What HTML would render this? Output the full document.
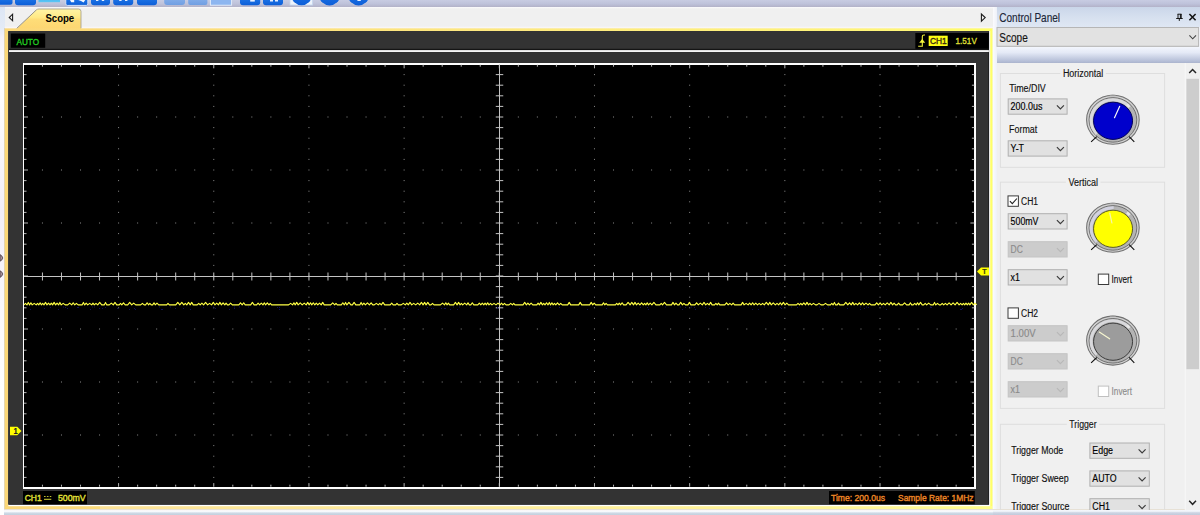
<!DOCTYPE html>
<html lang="en">
<head>
<meta charset="utf-8">
<title>Scope</title>
<style>
html,body{margin:0;padding:0;}
body{width:1200px;height:515px;overflow:hidden;background:#fff;font-family:"Liberation Sans",sans-serif;font-size:9px;color:#111;}
#app{position:relative;width:1200px;height:515px;overflow:hidden;background:#f4f6fb;}
.abs{position:absolute;}
/* toolbar strip */
#toolbar{left:0;top:0;width:1200px;height:7.2px;background:linear-gradient(#c8cce2,#bec2da 55%,#b3b2c8);}
.tb{position:absolute;top:-6px;height:11px;border-radius:3px;background:linear-gradient(#2f86ee,#0d5fd6);}
.tb.l{background:linear-gradient(#8fb6ee,#6f9fe2);}
.tb.c{border-radius:50%;height:19px;top:-14px;}
/* tab strip */
#leftedge{left:0;top:7px;width:4.6px;height:508px;background:linear-gradient(#dde6f4 0,#e4ebf6 4%,#f4f2fa 6%,#ffffff 14%,#f2eef8 40%,#ffffff 75%);}
#tabbar{left:4.6px;top:7.2px;width:988px;height:21.4px;background:linear-gradient(#fbfbfc 0,#f0f0f0 9%,#f0f0f0 86%,#faf6f6 95%,#f6ecd8);}
#tab{left:0;top:0;width:100px;height:30px;}
.tabtxt{left:45.5px;top:12px;font-weight:bold;font-size:9.6px;line-height:12px;color:#000;letter-spacing:-0.1px;}
/* scope frame */
#frame{left:4.5px;top:28.4px;width:988.1px;height:481px;background:linear-gradient(90deg,#fbd778,#fde07a 50%,#fff574 92%,#ffff62);}
#frameinner{left:8.4px;top:31.1px;width:981.5px;height:475.3px;background:linear-gradient(#fff 0,#fff 99.6%,#fff6c8);}
#dark{left:8.5px;top:31.2px;width:980.5px;height:473.4px;background:#333333;}
.blk{background:#000;}
#hline{left:9px;top:50.1px;width:980px;height:2px;background:#f4f4f4;}
#hlineb{left:9px;top:48.6px;width:980px;height:1.5px;background:#151515;}
.scopetxt{font-size:8.6px;line-height:10px;white-space:nowrap;}
svg.scope{position:absolute;left:0;top:0;}
/* control panel */
#cpdiv{left:992.6px;top:7px;width:4px;height:504px;background:linear-gradient(90deg,#fbfbfd,#eef1f8);}
#cphead{left:996.5px;top:7px;width:203.5px;height:20.4px;background:linear-gradient(#cad6e9,#d6e0ef 50%,#dfe7f4);}
#cphead span{position:absolute;left:3px;top:3.4px;font-size:11.6px;line-height:14px;color:#1e2a3c;letter-spacing:-0.15px;}
#cpcombo{left:996.5px;top:27px;width:202.5px;height:19.5px;background:#e2e2e2;}
#cpcombo span{position:absolute;left:2.4px;top:2px;font-size:11.6px;line-height:14px;color:#111;letter-spacing:-0.1px;}
#cpgrad{left:996.5px;top:46.5px;width:203.5px;height:16.5px;background:linear-gradient(#f3f6fd,#e4e9f6 35%,#b4bdd6 90%,#aab3cd);}
#cpbody{left:996.5px;top:63px;width:203.5px;height:447.5px;background:#f0f0f0;}
#bottom{left:4px;top:509.4px;width:1196px;height:6px;background:linear-gradient(#c9c2a6 0,#fbf6f6 14%,#f6f9fe 45%,#cfdae6 66%,#c2d0de);}
#bottomR{display:none;}
.grp{position:absolute;border:1px solid #dcdcdc;box-sizing:border-box;}
.gt{position:absolute;background:#f0f0f0;padding:0 2px;font-size:9.1px;line-height:11px;white-space:nowrap;transform:translateX(-50%);color:#111;}
.lbl{position:absolute;font-size:9.1px;line-height:11px;white-space:nowrap;color:#111;}
.cb{position:absolute;box-sizing:border-box;width:60px;height:16.4px;border:1px solid #adadad;background:#e1e1e1;font-size:9.1px;line-height:14.4px;padding-left:2.4px;color:#000;white-space:nowrap;}
.cb.dis{background:#cccccc;border-color:#bfbfbf;color:#8c8c8c;}
.cb svg{position:absolute;right:3.6px;top:5.6px;}
.chk{position:absolute;box-sizing:border-box;width:11px;height:11px;border:1px solid #333;background:#fff;}
.chk.dis{border-color:#c4c4c4;}
#sb{left:1185.5px;top:63px;width:14.5px;height:447.5px;background:#f0f0f0;}
#sbthumb{left:1186.4px;top:78.8px;width:12.6px;height:290.4px;background:#cdcdcd;}
</style>
</head>
<body>
<div id="app">
  <!-- toolbar sliver -->
  <div id="toolbar" class="abs">
  <svg class="abs" style="left:0;top:0" width="400" height="8" viewBox="0 0 400 8">
    <defs>
      <linearGradient id="ib" x1="0" y1="0" x2="0" y2="1"><stop offset="0" stop-color="#2a84f0"/><stop offset="1" stop-color="#0c5ed8"/></linearGradient>
      <linearGradient id="il" x1="0" y1="0" x2="0" y2="1"><stop offset="0" stop-color="#92b8f0"/><stop offset="1" stop-color="#709fe2"/></linearGradient>
      <linearGradient id="ic" x1="0" y1="0" x2="0" y2="1"><stop offset="0" stop-color="#2f9cf0"/><stop offset="1" stop-color="#5cc8f4"/></linearGradient>
    </defs>
    <rect x="-4" y="-6" width="16.5" height="10.8" rx="2.5" fill="url(#ib)"/>
    <rect x="15" y="-6" width="21" height="11.2" rx="3" fill="url(#ib)"/>
    <rect x="38.5" y="-6" width="21.5" height="8.2" fill="url(#ic)"/>
    <rect x="65.8" y="-6" width="22" height="11.4" rx="1.5" fill="url(#ib)" stroke="#dbe7f8" stroke-width="0.9"/>
    <path d="M70 0 h4.2 v2.2 h-3 Z M78.2 0 h7 l-1.6 2.6 l-2.6 -1.6 Z" fill="#f4f8ff"/>
    <rect x="91" y="-6" width="19" height="11.2" rx="3" fill="url(#ib)"/>
    <path d="M96 0 h2.4 v1 h-2.4 Z M101.8 0 h2.4 v1 h-2.4 Z" fill="#e8f0ff"/>
    <rect x="113.2" y="-6" width="20" height="11.2" rx="3" fill="url(#ib)"/>
    <path d="M119.2 0 h2.4 v1 h-2.4 Z M125 0 h2.4 v1 h-2.4 Z" fill="#e8f0ff"/>
    <rect x="137" y="-6" width="20" height="11.2" rx="3" fill="url(#ib)"/>
    <rect x="164.2" y="-6" width="20.8" height="11" rx="3" fill="url(#il)"/>
    <rect x="188.2" y="-6" width="19.2" height="11" rx="2" fill="url(#il)"/>
    <rect x="210.4" y="-6" width="21.2" height="11.2" fill="#8db6f0" stroke="#e6effb" stroke-width="0.9"/>
    <rect x="240" y="-6" width="20.2" height="11.2" rx="3" fill="url(#ib)"/>
    <path d="M250.2 0 h4.6 v1.6 h-4.6 Z" fill="#e8f0ff"/>
    <rect x="263" y="-6" width="20" height="11.2" rx="3" fill="url(#ib)"/>
    <path d="M270 0 h3 v1.6 h-3 Z M275 0 h3 v1.6 h-3 Z" fill="#e8f0ff"/>
    <rect x="290" y="-6" width="22.6" height="11" fill="#eef4fc" stroke="#c4d6ee" stroke-width="0.8"/>
    <ellipse cx="301.6" cy="-5" rx="10.2" ry="10.3" fill="url(#ib)"/>
    <ellipse cx="329.6" cy="-5" rx="10.6" ry="10.4" fill="url(#ib)"/>
    <ellipse cx="358.6" cy="-5" rx="10.6" ry="10.4" fill="url(#ib)"/>
    <path d="M357.4 0 h3.4 v1 h-3.4 Z" fill="#e8f0ff"/>
  </svg>
  </div>
  <div id="leftedge" class="abs"></div>
  <div id="tabbar" class="abs"></div>
  <svg class="abs" style="left:0;top:250px" width="5" height="32" viewBox="0 0 5 32">
    <path d="M0 4.6 Q2.6 6 2.8 8 Q2.6 10 0 11.2 Z" fill="#a8909a" stroke="#3a3038" stroke-width="0.7"/>
    <path d="M0 20.8 Q2.6 22 2.8 24 Q2.6 26 0 27.4 Z" fill="#a8909a" stroke="#3a3038" stroke-width="0.7"/>
  </svg>
  <!-- tab -->
  <svg id="tab" class="abs" viewBox="0 0 100 30" width="100" height="30">
    <defs><linearGradient id="tg" x1="0" y1="0" x2="0" y2="1"><stop offset="0.1" stop-color="#fff29e"/><stop offset="0.42" stop-color="#ffe986"/><stop offset="0.52" stop-color="#fedd78"/><stop offset="1" stop-color="#fdd672"/></linearGradient></defs>
    <path d="M16.5 29 L36.5 10 Q37.5 9 39 9 L78.5 9 Q81 9 81 11.5 L81 29 Z" fill="url(#tg)"/>
    <path d="M16.5 28.6 L36.5 9.8" stroke="#8a8676" stroke-width="0.9" fill="none"/>
    <path d="M36.5 9.8 Q37.5 9 39 9 L78.5 9 Q81 9 81 11.5 L81 28.4" stroke="#aaa590" stroke-width="0.9" fill="none"/>
    <path d="M12.6 14.2 L12.6 20.8 L9.2 17.5 Z" fill="none" stroke="#1c1c1c" stroke-width="1.1"/>
  </svg>
  <svg class="abs" style="left:975px;top:10px" width="16" height="16" viewBox="975 10 16 16"><path d="M981.4 14 L981.4 21.2 L985.2 17.6 Z" fill="none" stroke="#1c1c1c" stroke-width="1.1"/></svg>
  <svg class="abs" style="left:0;top:0" width="100" height="30" viewBox="0 0 100 30"><text x="45.4" y="21.7" font-family="Liberation Sans, sans-serif" font-weight="bold" font-size="10.5" textLength="28.8" lengthAdjust="spacingAndGlyphs" fill="#000">Scope</text></svg>

  <!-- scope frame -->
  <svg class="scope" width="1200" height="515" viewBox="0 0 1200 515" shape-rendering="crispEdges">
<defs><linearGradient id="fg" x1="0" y1="0" x2="1" y2="0"><stop offset="0" stop-color="#fbd778"/><stop offset="0.5" stop-color="#fde880"/><stop offset="0.92" stop-color="#fff678"/><stop offset="1" stop-color="#ffff68"/></linearGradient></defs>
<g shape-rendering="auto">
<rect x="4.1" y="28.2" width="0.6" height="481.4" fill="#b9b9b9"/>
<rect x="4.6" y="28.4" width="987.9" height="481" fill="url(#fg)"/>
<rect x="100" y="506" width="892.5" height="3.4" fill="#ffffff" opacity="0.22"/>
<rect x="8.3" y="31.1" width="981.9" height="475.1" fill="#ffffff"/>
<rect x="8.3" y="31.1" width="980.8" height="473.7" fill="#121216"/>
<rect x="8.3" y="31.1" width="980.2" height="472.9" fill="#333333"/>
<rect x="9" y="48.8" width="979.9" height="1.4" fill="#141414"/>
<rect x="9" y="50.1" width="979.9" height="2" fill="#f6f6f6"/>
<rect x="9" y="52.1" width="979.9" height="0.5" fill="#1c1c1c"/>
</g>
<rect x="22.5" y="63" width="953.5" height="425.5" fill="#fff"/>
<rect x="24" y="64.7" width="950.4" height="422" fill="#000"/>
<g fill="#8c8c8c" shape-rendering="auto"><rect x="118.08" y="74.1" width="1" height="1"/><rect x="118.08" y="84.7" width="1" height="1"/><rect x="118.08" y="95.3" width="1" height="1"/><rect x="118.08" y="105.9" width="1" height="1"/><rect x="118.08" y="116.5" width="1" height="1"/><rect x="118.08" y="127.1" width="1" height="1"/><rect x="118.08" y="137.7" width="1" height="1"/><rect x="118.08" y="148.3" width="1" height="1"/><rect x="118.08" y="158.9" width="1" height="1"/><rect x="118.08" y="169.5" width="1" height="1"/><rect x="118.08" y="180.1" width="1" height="1"/><rect x="118.08" y="190.7" width="1" height="1"/><rect x="118.08" y="201.3" width="1" height="1"/><rect x="118.08" y="211.9" width="1" height="1"/><rect x="118.08" y="222.5" width="1" height="1"/><rect x="118.08" y="233.1" width="1" height="1"/><rect x="118.08" y="243.7" width="1" height="1"/><rect x="118.08" y="254.3" width="1" height="1"/><rect x="118.08" y="264.9" width="1" height="1"/><rect x="118.08" y="275.5" width="1" height="1"/><rect x="118.08" y="286.1" width="1" height="1"/><rect x="118.08" y="296.7" width="1" height="1"/><rect x="118.08" y="307.3" width="1" height="1"/><rect x="118.08" y="317.9" width="1" height="1"/><rect x="118.08" y="328.5" width="1" height="1"/><rect x="118.08" y="339.1" width="1" height="1"/><rect x="118.08" y="349.7" width="1" height="1"/><rect x="118.08" y="360.3" width="1" height="1"/><rect x="118.08" y="370.9" width="1" height="1"/><rect x="118.08" y="381.5" width="1" height="1"/><rect x="118.08" y="392.1" width="1" height="1"/><rect x="118.08" y="402.7" width="1" height="1"/><rect x="118.08" y="413.3" width="1" height="1"/><rect x="118.08" y="423.9" width="1" height="1"/><rect x="118.08" y="434.5" width="1" height="1"/><rect x="118.08" y="445.1" width="1" height="1"/><rect x="118.08" y="455.7" width="1" height="1"/><rect x="118.08" y="466.3" width="1" height="1"/><rect x="118.08" y="476.9" width="1" height="1"/><rect x="213.26" y="74.1" width="1" height="1"/><rect x="213.26" y="84.7" width="1" height="1"/><rect x="213.26" y="95.3" width="1" height="1"/><rect x="213.26" y="105.9" width="1" height="1"/><rect x="213.26" y="116.5" width="1" height="1"/><rect x="213.26" y="127.1" width="1" height="1"/><rect x="213.26" y="137.7" width="1" height="1"/><rect x="213.26" y="148.3" width="1" height="1"/><rect x="213.26" y="158.9" width="1" height="1"/><rect x="213.26" y="169.5" width="1" height="1"/><rect x="213.26" y="180.1" width="1" height="1"/><rect x="213.26" y="190.7" width="1" height="1"/><rect x="213.26" y="201.3" width="1" height="1"/><rect x="213.26" y="211.9" width="1" height="1"/><rect x="213.26" y="222.5" width="1" height="1"/><rect x="213.26" y="233.1" width="1" height="1"/><rect x="213.26" y="243.7" width="1" height="1"/><rect x="213.26" y="254.3" width="1" height="1"/><rect x="213.26" y="264.9" width="1" height="1"/><rect x="213.26" y="275.5" width="1" height="1"/><rect x="213.26" y="286.1" width="1" height="1"/><rect x="213.26" y="296.7" width="1" height="1"/><rect x="213.26" y="307.3" width="1" height="1"/><rect x="213.26" y="317.9" width="1" height="1"/><rect x="213.26" y="328.5" width="1" height="1"/><rect x="213.26" y="339.1" width="1" height="1"/><rect x="213.26" y="349.7" width="1" height="1"/><rect x="213.26" y="360.3" width="1" height="1"/><rect x="213.26" y="370.9" width="1" height="1"/><rect x="213.26" y="381.5" width="1" height="1"/><rect x="213.26" y="392.1" width="1" height="1"/><rect x="213.26" y="402.7" width="1" height="1"/><rect x="213.26" y="413.3" width="1" height="1"/><rect x="213.26" y="423.9" width="1" height="1"/><rect x="213.26" y="434.5" width="1" height="1"/><rect x="213.26" y="445.1" width="1" height="1"/><rect x="213.26" y="455.7" width="1" height="1"/><rect x="213.26" y="466.3" width="1" height="1"/><rect x="213.26" y="476.9" width="1" height="1"/><rect x="308.44" y="74.1" width="1" height="1"/><rect x="308.44" y="84.7" width="1" height="1"/><rect x="308.44" y="95.3" width="1" height="1"/><rect x="308.44" y="105.9" width="1" height="1"/><rect x="308.44" y="116.5" width="1" height="1"/><rect x="308.44" y="127.1" width="1" height="1"/><rect x="308.44" y="137.7" width="1" height="1"/><rect x="308.44" y="148.3" width="1" height="1"/><rect x="308.44" y="158.9" width="1" height="1"/><rect x="308.44" y="169.5" width="1" height="1"/><rect x="308.44" y="180.1" width="1" height="1"/><rect x="308.44" y="190.7" width="1" height="1"/><rect x="308.44" y="201.3" width="1" height="1"/><rect x="308.44" y="211.9" width="1" height="1"/><rect x="308.44" y="222.5" width="1" height="1"/><rect x="308.44" y="233.1" width="1" height="1"/><rect x="308.44" y="243.7" width="1" height="1"/><rect x="308.44" y="254.3" width="1" height="1"/><rect x="308.44" y="264.9" width="1" height="1"/><rect x="308.44" y="275.5" width="1" height="1"/><rect x="308.44" y="286.1" width="1" height="1"/><rect x="308.44" y="296.7" width="1" height="1"/><rect x="308.44" y="307.3" width="1" height="1"/><rect x="308.44" y="317.9" width="1" height="1"/><rect x="308.44" y="328.5" width="1" height="1"/><rect x="308.44" y="339.1" width="1" height="1"/><rect x="308.44" y="349.7" width="1" height="1"/><rect x="308.44" y="360.3" width="1" height="1"/><rect x="308.44" y="370.9" width="1" height="1"/><rect x="308.44" y="381.5" width="1" height="1"/><rect x="308.44" y="392.1" width="1" height="1"/><rect x="308.44" y="402.7" width="1" height="1"/><rect x="308.44" y="413.3" width="1" height="1"/><rect x="308.44" y="423.9" width="1" height="1"/><rect x="308.44" y="434.5" width="1" height="1"/><rect x="308.44" y="445.1" width="1" height="1"/><rect x="308.44" y="455.7" width="1" height="1"/><rect x="308.44" y="466.3" width="1" height="1"/><rect x="308.44" y="476.9" width="1" height="1"/><rect x="403.62" y="74.1" width="1" height="1"/><rect x="403.62" y="84.7" width="1" height="1"/><rect x="403.62" y="95.3" width="1" height="1"/><rect x="403.62" y="105.9" width="1" height="1"/><rect x="403.62" y="116.5" width="1" height="1"/><rect x="403.62" y="127.1" width="1" height="1"/><rect x="403.62" y="137.7" width="1" height="1"/><rect x="403.62" y="148.3" width="1" height="1"/><rect x="403.62" y="158.9" width="1" height="1"/><rect x="403.62" y="169.5" width="1" height="1"/><rect x="403.62" y="180.1" width="1" height="1"/><rect x="403.62" y="190.7" width="1" height="1"/><rect x="403.62" y="201.3" width="1" height="1"/><rect x="403.62" y="211.9" width="1" height="1"/><rect x="403.62" y="222.5" width="1" height="1"/><rect x="403.62" y="233.1" width="1" height="1"/><rect x="403.62" y="243.7" width="1" height="1"/><rect x="403.62" y="254.3" width="1" height="1"/><rect x="403.62" y="264.9" width="1" height="1"/><rect x="403.62" y="275.5" width="1" height="1"/><rect x="403.62" y="286.1" width="1" height="1"/><rect x="403.62" y="296.7" width="1" height="1"/><rect x="403.62" y="307.3" width="1" height="1"/><rect x="403.62" y="317.9" width="1" height="1"/><rect x="403.62" y="328.5" width="1" height="1"/><rect x="403.62" y="339.1" width="1" height="1"/><rect x="403.62" y="349.7" width="1" height="1"/><rect x="403.62" y="360.3" width="1" height="1"/><rect x="403.62" y="370.9" width="1" height="1"/><rect x="403.62" y="381.5" width="1" height="1"/><rect x="403.62" y="392.1" width="1" height="1"/><rect x="403.62" y="402.7" width="1" height="1"/><rect x="403.62" y="413.3" width="1" height="1"/><rect x="403.62" y="423.9" width="1" height="1"/><rect x="403.62" y="434.5" width="1" height="1"/><rect x="403.62" y="445.1" width="1" height="1"/><rect x="403.62" y="455.7" width="1" height="1"/><rect x="403.62" y="466.3" width="1" height="1"/><rect x="403.62" y="476.9" width="1" height="1"/><rect x="593.98" y="74.1" width="1" height="1"/><rect x="593.98" y="84.7" width="1" height="1"/><rect x="593.98" y="95.3" width="1" height="1"/><rect x="593.98" y="105.9" width="1" height="1"/><rect x="593.98" y="116.5" width="1" height="1"/><rect x="593.98" y="127.1" width="1" height="1"/><rect x="593.98" y="137.7" width="1" height="1"/><rect x="593.98" y="148.3" width="1" height="1"/><rect x="593.98" y="158.9" width="1" height="1"/><rect x="593.98" y="169.5" width="1" height="1"/><rect x="593.98" y="180.1" width="1" height="1"/><rect x="593.98" y="190.7" width="1" height="1"/><rect x="593.98" y="201.3" width="1" height="1"/><rect x="593.98" y="211.9" width="1" height="1"/><rect x="593.98" y="222.5" width="1" height="1"/><rect x="593.98" y="233.1" width="1" height="1"/><rect x="593.98" y="243.7" width="1" height="1"/><rect x="593.98" y="254.3" width="1" height="1"/><rect x="593.98" y="264.9" width="1" height="1"/><rect x="593.98" y="275.5" width="1" height="1"/><rect x="593.98" y="286.1" width="1" height="1"/><rect x="593.98" y="296.7" width="1" height="1"/><rect x="593.98" y="307.3" width="1" height="1"/><rect x="593.98" y="317.9" width="1" height="1"/><rect x="593.98" y="328.5" width="1" height="1"/><rect x="593.98" y="339.1" width="1" height="1"/><rect x="593.98" y="349.7" width="1" height="1"/><rect x="593.98" y="360.3" width="1" height="1"/><rect x="593.98" y="370.9" width="1" height="1"/><rect x="593.98" y="381.5" width="1" height="1"/><rect x="593.98" y="392.1" width="1" height="1"/><rect x="593.98" y="402.7" width="1" height="1"/><rect x="593.98" y="413.3" width="1" height="1"/><rect x="593.98" y="423.9" width="1" height="1"/><rect x="593.98" y="434.5" width="1" height="1"/><rect x="593.98" y="445.1" width="1" height="1"/><rect x="593.98" y="455.7" width="1" height="1"/><rect x="593.98" y="466.3" width="1" height="1"/><rect x="593.98" y="476.9" width="1" height="1"/><rect x="689.16" y="74.1" width="1" height="1"/><rect x="689.16" y="84.7" width="1" height="1"/><rect x="689.16" y="95.3" width="1" height="1"/><rect x="689.16" y="105.9" width="1" height="1"/><rect x="689.16" y="116.5" width="1" height="1"/><rect x="689.16" y="127.1" width="1" height="1"/><rect x="689.16" y="137.7" width="1" height="1"/><rect x="689.16" y="148.3" width="1" height="1"/><rect x="689.16" y="158.9" width="1" height="1"/><rect x="689.16" y="169.5" width="1" height="1"/><rect x="689.16" y="180.1" width="1" height="1"/><rect x="689.16" y="190.7" width="1" height="1"/><rect x="689.16" y="201.3" width="1" height="1"/><rect x="689.16" y="211.9" width="1" height="1"/><rect x="689.16" y="222.5" width="1" height="1"/><rect x="689.16" y="233.1" width="1" height="1"/><rect x="689.16" y="243.7" width="1" height="1"/><rect x="689.16" y="254.3" width="1" height="1"/><rect x="689.16" y="264.9" width="1" height="1"/><rect x="689.16" y="275.5" width="1" height="1"/><rect x="689.16" y="286.1" width="1" height="1"/><rect x="689.16" y="296.7" width="1" height="1"/><rect x="689.16" y="307.3" width="1" height="1"/><rect x="689.16" y="317.9" width="1" height="1"/><rect x="689.16" y="328.5" width="1" height="1"/><rect x="689.16" y="339.1" width="1" height="1"/><rect x="689.16" y="349.7" width="1" height="1"/><rect x="689.16" y="360.3" width="1" height="1"/><rect x="689.16" y="370.9" width="1" height="1"/><rect x="689.16" y="381.5" width="1" height="1"/><rect x="689.16" y="392.1" width="1" height="1"/><rect x="689.16" y="402.7" width="1" height="1"/><rect x="689.16" y="413.3" width="1" height="1"/><rect x="689.16" y="423.9" width="1" height="1"/><rect x="689.16" y="434.5" width="1" height="1"/><rect x="689.16" y="445.1" width="1" height="1"/><rect x="689.16" y="455.7" width="1" height="1"/><rect x="689.16" y="466.3" width="1" height="1"/><rect x="689.16" y="476.9" width="1" height="1"/><rect x="784.34" y="74.1" width="1" height="1"/><rect x="784.34" y="84.7" width="1" height="1"/><rect x="784.34" y="95.3" width="1" height="1"/><rect x="784.34" y="105.9" width="1" height="1"/><rect x="784.34" y="116.5" width="1" height="1"/><rect x="784.34" y="127.1" width="1" height="1"/><rect x="784.34" y="137.7" width="1" height="1"/><rect x="784.34" y="148.3" width="1" height="1"/><rect x="784.34" y="158.9" width="1" height="1"/><rect x="784.34" y="169.5" width="1" height="1"/><rect x="784.34" y="180.1" width="1" height="1"/><rect x="784.34" y="190.7" width="1" height="1"/><rect x="784.34" y="201.3" width="1" height="1"/><rect x="784.34" y="211.9" width="1" height="1"/><rect x="784.34" y="222.5" width="1" height="1"/><rect x="784.34" y="233.1" width="1" height="1"/><rect x="784.34" y="243.7" width="1" height="1"/><rect x="784.34" y="254.3" width="1" height="1"/><rect x="784.34" y="264.9" width="1" height="1"/><rect x="784.34" y="275.5" width="1" height="1"/><rect x="784.34" y="286.1" width="1" height="1"/><rect x="784.34" y="296.7" width="1" height="1"/><rect x="784.34" y="307.3" width="1" height="1"/><rect x="784.34" y="317.9" width="1" height="1"/><rect x="784.34" y="328.5" width="1" height="1"/><rect x="784.34" y="339.1" width="1" height="1"/><rect x="784.34" y="349.7" width="1" height="1"/><rect x="784.34" y="360.3" width="1" height="1"/><rect x="784.34" y="370.9" width="1" height="1"/><rect x="784.34" y="381.5" width="1" height="1"/><rect x="784.34" y="392.1" width="1" height="1"/><rect x="784.34" y="402.7" width="1" height="1"/><rect x="784.34" y="413.3" width="1" height="1"/><rect x="784.34" y="423.9" width="1" height="1"/><rect x="784.34" y="434.5" width="1" height="1"/><rect x="784.34" y="445.1" width="1" height="1"/><rect x="784.34" y="455.7" width="1" height="1"/><rect x="784.34" y="466.3" width="1" height="1"/><rect x="784.34" y="476.9" width="1" height="1"/><rect x="879.52" y="74.1" width="1" height="1"/><rect x="879.52" y="84.7" width="1" height="1"/><rect x="879.52" y="95.3" width="1" height="1"/><rect x="879.52" y="105.9" width="1" height="1"/><rect x="879.52" y="116.5" width="1" height="1"/><rect x="879.52" y="127.1" width="1" height="1"/><rect x="879.52" y="137.7" width="1" height="1"/><rect x="879.52" y="148.3" width="1" height="1"/><rect x="879.52" y="158.9" width="1" height="1"/><rect x="879.52" y="169.5" width="1" height="1"/><rect x="879.52" y="180.1" width="1" height="1"/><rect x="879.52" y="190.7" width="1" height="1"/><rect x="879.52" y="201.3" width="1" height="1"/><rect x="879.52" y="211.9" width="1" height="1"/><rect x="879.52" y="222.5" width="1" height="1"/><rect x="879.52" y="233.1" width="1" height="1"/><rect x="879.52" y="243.7" width="1" height="1"/><rect x="879.52" y="254.3" width="1" height="1"/><rect x="879.52" y="264.9" width="1" height="1"/><rect x="879.52" y="275.5" width="1" height="1"/><rect x="879.52" y="286.1" width="1" height="1"/><rect x="879.52" y="296.7" width="1" height="1"/><rect x="879.52" y="307.3" width="1" height="1"/><rect x="879.52" y="317.9" width="1" height="1"/><rect x="879.52" y="328.5" width="1" height="1"/><rect x="879.52" y="339.1" width="1" height="1"/><rect x="879.52" y="349.7" width="1" height="1"/><rect x="879.52" y="360.3" width="1" height="1"/><rect x="879.52" y="370.9" width="1" height="1"/><rect x="879.52" y="381.5" width="1" height="1"/><rect x="879.52" y="392.1" width="1" height="1"/><rect x="879.52" y="402.7" width="1" height="1"/><rect x="879.52" y="413.3" width="1" height="1"/><rect x="879.52" y="423.9" width="1" height="1"/><rect x="879.52" y="434.5" width="1" height="1"/><rect x="879.52" y="445.1" width="1" height="1"/><rect x="879.52" y="455.7" width="1" height="1"/><rect x="879.52" y="466.3" width="1" height="1"/><rect x="879.52" y="476.9" width="1" height="1"/><rect x="41.94" y="116.5" width="1" height="1"/><rect x="60.97" y="116.5" width="1" height="1"/><rect x="80.01" y="116.5" width="1" height="1"/><rect x="99.04" y="116.5" width="1" height="1"/><rect x="137.12" y="116.5" width="1" height="1"/><rect x="156.15" y="116.5" width="1" height="1"/><rect x="175.19" y="116.5" width="1" height="1"/><rect x="194.22" y="116.5" width="1" height="1"/><rect x="232.3" y="116.5" width="1" height="1"/><rect x="251.33" y="116.5" width="1" height="1"/><rect x="270.37" y="116.5" width="1" height="1"/><rect x="289.4" y="116.5" width="1" height="1"/><rect x="327.48" y="116.5" width="1" height="1"/><rect x="346.51" y="116.5" width="1" height="1"/><rect x="365.55" y="116.5" width="1" height="1"/><rect x="384.58" y="116.5" width="1" height="1"/><rect x="422.66" y="116.5" width="1" height="1"/><rect x="441.69" y="116.5" width="1" height="1"/><rect x="460.73" y="116.5" width="1" height="1"/><rect x="479.76" y="116.5" width="1" height="1"/><rect x="517.84" y="116.5" width="1" height="1"/><rect x="536.87" y="116.5" width="1" height="1"/><rect x="555.91" y="116.5" width="1" height="1"/><rect x="574.94" y="116.5" width="1" height="1"/><rect x="613.02" y="116.5" width="1" height="1"/><rect x="632.05" y="116.5" width="1" height="1"/><rect x="651.09" y="116.5" width="1" height="1"/><rect x="670.12" y="116.5" width="1" height="1"/><rect x="708.2" y="116.5" width="1" height="1"/><rect x="727.23" y="116.5" width="1" height="1"/><rect x="746.27" y="116.5" width="1" height="1"/><rect x="765.3" y="116.5" width="1" height="1"/><rect x="803.38" y="116.5" width="1" height="1"/><rect x="822.41" y="116.5" width="1" height="1"/><rect x="841.45" y="116.5" width="1" height="1"/><rect x="860.48" y="116.5" width="1" height="1"/><rect x="898.56" y="116.5" width="1" height="1"/><rect x="917.59" y="116.5" width="1" height="1"/><rect x="936.63" y="116.5" width="1" height="1"/><rect x="955.66" y="116.5" width="1" height="1"/><rect x="41.94" y="169.5" width="1" height="1"/><rect x="60.97" y="169.5" width="1" height="1"/><rect x="80.01" y="169.5" width="1" height="1"/><rect x="99.04" y="169.5" width="1" height="1"/><rect x="137.12" y="169.5" width="1" height="1"/><rect x="156.15" y="169.5" width="1" height="1"/><rect x="175.19" y="169.5" width="1" height="1"/><rect x="194.22" y="169.5" width="1" height="1"/><rect x="232.3" y="169.5" width="1" height="1"/><rect x="251.33" y="169.5" width="1" height="1"/><rect x="270.37" y="169.5" width="1" height="1"/><rect x="289.4" y="169.5" width="1" height="1"/><rect x="327.48" y="169.5" width="1" height="1"/><rect x="346.51" y="169.5" width="1" height="1"/><rect x="365.55" y="169.5" width="1" height="1"/><rect x="384.58" y="169.5" width="1" height="1"/><rect x="422.66" y="169.5" width="1" height="1"/><rect x="441.69" y="169.5" width="1" height="1"/><rect x="460.73" y="169.5" width="1" height="1"/><rect x="479.76" y="169.5" width="1" height="1"/><rect x="517.84" y="169.5" width="1" height="1"/><rect x="536.87" y="169.5" width="1" height="1"/><rect x="555.91" y="169.5" width="1" height="1"/><rect x="574.94" y="169.5" width="1" height="1"/><rect x="613.02" y="169.5" width="1" height="1"/><rect x="632.05" y="169.5" width="1" height="1"/><rect x="651.09" y="169.5" width="1" height="1"/><rect x="670.12" y="169.5" width="1" height="1"/><rect x="708.2" y="169.5" width="1" height="1"/><rect x="727.23" y="169.5" width="1" height="1"/><rect x="746.27" y="169.5" width="1" height="1"/><rect x="765.3" y="169.5" width="1" height="1"/><rect x="803.38" y="169.5" width="1" height="1"/><rect x="822.41" y="169.5" width="1" height="1"/><rect x="841.45" y="169.5" width="1" height="1"/><rect x="860.48" y="169.5" width="1" height="1"/><rect x="898.56" y="169.5" width="1" height="1"/><rect x="917.59" y="169.5" width="1" height="1"/><rect x="936.63" y="169.5" width="1" height="1"/><rect x="955.66" y="169.5" width="1" height="1"/><rect x="41.94" y="222.5" width="1" height="1"/><rect x="60.97" y="222.5" width="1" height="1"/><rect x="80.01" y="222.5" width="1" height="1"/><rect x="99.04" y="222.5" width="1" height="1"/><rect x="137.12" y="222.5" width="1" height="1"/><rect x="156.15" y="222.5" width="1" height="1"/><rect x="175.19" y="222.5" width="1" height="1"/><rect x="194.22" y="222.5" width="1" height="1"/><rect x="232.3" y="222.5" width="1" height="1"/><rect x="251.33" y="222.5" width="1" height="1"/><rect x="270.37" y="222.5" width="1" height="1"/><rect x="289.4" y="222.5" width="1" height="1"/><rect x="327.48" y="222.5" width="1" height="1"/><rect x="346.51" y="222.5" width="1" height="1"/><rect x="365.55" y="222.5" width="1" height="1"/><rect x="384.58" y="222.5" width="1" height="1"/><rect x="422.66" y="222.5" width="1" height="1"/><rect x="441.69" y="222.5" width="1" height="1"/><rect x="460.73" y="222.5" width="1" height="1"/><rect x="479.76" y="222.5" width="1" height="1"/><rect x="517.84" y="222.5" width="1" height="1"/><rect x="536.87" y="222.5" width="1" height="1"/><rect x="555.91" y="222.5" width="1" height="1"/><rect x="574.94" y="222.5" width="1" height="1"/><rect x="613.02" y="222.5" width="1" height="1"/><rect x="632.05" y="222.5" width="1" height="1"/><rect x="651.09" y="222.5" width="1" height="1"/><rect x="670.12" y="222.5" width="1" height="1"/><rect x="708.2" y="222.5" width="1" height="1"/><rect x="727.23" y="222.5" width="1" height="1"/><rect x="746.27" y="222.5" width="1" height="1"/><rect x="765.3" y="222.5" width="1" height="1"/><rect x="803.38" y="222.5" width="1" height="1"/><rect x="822.41" y="222.5" width="1" height="1"/><rect x="841.45" y="222.5" width="1" height="1"/><rect x="860.48" y="222.5" width="1" height="1"/><rect x="898.56" y="222.5" width="1" height="1"/><rect x="917.59" y="222.5" width="1" height="1"/><rect x="936.63" y="222.5" width="1" height="1"/><rect x="955.66" y="222.5" width="1" height="1"/><rect x="41.94" y="328.5" width="1" height="1"/><rect x="60.97" y="328.5" width="1" height="1"/><rect x="80.01" y="328.5" width="1" height="1"/><rect x="99.04" y="328.5" width="1" height="1"/><rect x="137.12" y="328.5" width="1" height="1"/><rect x="156.15" y="328.5" width="1" height="1"/><rect x="175.19" y="328.5" width="1" height="1"/><rect x="194.22" y="328.5" width="1" height="1"/><rect x="232.3" y="328.5" width="1" height="1"/><rect x="251.33" y="328.5" width="1" height="1"/><rect x="270.37" y="328.5" width="1" height="1"/><rect x="289.4" y="328.5" width="1" height="1"/><rect x="327.48" y="328.5" width="1" height="1"/><rect x="346.51" y="328.5" width="1" height="1"/><rect x="365.55" y="328.5" width="1" height="1"/><rect x="384.58" y="328.5" width="1" height="1"/><rect x="422.66" y="328.5" width="1" height="1"/><rect x="441.69" y="328.5" width="1" height="1"/><rect x="460.73" y="328.5" width="1" height="1"/><rect x="479.76" y="328.5" width="1" height="1"/><rect x="517.84" y="328.5" width="1" height="1"/><rect x="536.87" y="328.5" width="1" height="1"/><rect x="555.91" y="328.5" width="1" height="1"/><rect x="574.94" y="328.5" width="1" height="1"/><rect x="613.02" y="328.5" width="1" height="1"/><rect x="632.05" y="328.5" width="1" height="1"/><rect x="651.09" y="328.5" width="1" height="1"/><rect x="670.12" y="328.5" width="1" height="1"/><rect x="708.2" y="328.5" width="1" height="1"/><rect x="727.23" y="328.5" width="1" height="1"/><rect x="746.27" y="328.5" width="1" height="1"/><rect x="765.3" y="328.5" width="1" height="1"/><rect x="803.38" y="328.5" width="1" height="1"/><rect x="822.41" y="328.5" width="1" height="1"/><rect x="841.45" y="328.5" width="1" height="1"/><rect x="860.48" y="328.5" width="1" height="1"/><rect x="898.56" y="328.5" width="1" height="1"/><rect x="917.59" y="328.5" width="1" height="1"/><rect x="936.63" y="328.5" width="1" height="1"/><rect x="955.66" y="328.5" width="1" height="1"/><rect x="41.94" y="381.5" width="1" height="1"/><rect x="60.97" y="381.5" width="1" height="1"/><rect x="80.01" y="381.5" width="1" height="1"/><rect x="99.04" y="381.5" width="1" height="1"/><rect x="137.12" y="381.5" width="1" height="1"/><rect x="156.15" y="381.5" width="1" height="1"/><rect x="175.19" y="381.5" width="1" height="1"/><rect x="194.22" y="381.5" width="1" height="1"/><rect x="232.3" y="381.5" width="1" height="1"/><rect x="251.33" y="381.5" width="1" height="1"/><rect x="270.37" y="381.5" width="1" height="1"/><rect x="289.4" y="381.5" width="1" height="1"/><rect x="327.48" y="381.5" width="1" height="1"/><rect x="346.51" y="381.5" width="1" height="1"/><rect x="365.55" y="381.5" width="1" height="1"/><rect x="384.58" y="381.5" width="1" height="1"/><rect x="422.66" y="381.5" width="1" height="1"/><rect x="441.69" y="381.5" width="1" height="1"/><rect x="460.73" y="381.5" width="1" height="1"/><rect x="479.76" y="381.5" width="1" height="1"/><rect x="517.84" y="381.5" width="1" height="1"/><rect x="536.87" y="381.5" width="1" height="1"/><rect x="555.91" y="381.5" width="1" height="1"/><rect x="574.94" y="381.5" width="1" height="1"/><rect x="613.02" y="381.5" width="1" height="1"/><rect x="632.05" y="381.5" width="1" height="1"/><rect x="651.09" y="381.5" width="1" height="1"/><rect x="670.12" y="381.5" width="1" height="1"/><rect x="708.2" y="381.5" width="1" height="1"/><rect x="727.23" y="381.5" width="1" height="1"/><rect x="746.27" y="381.5" width="1" height="1"/><rect x="765.3" y="381.5" width="1" height="1"/><rect x="803.38" y="381.5" width="1" height="1"/><rect x="822.41" y="381.5" width="1" height="1"/><rect x="841.45" y="381.5" width="1" height="1"/><rect x="860.48" y="381.5" width="1" height="1"/><rect x="898.56" y="381.5" width="1" height="1"/><rect x="917.59" y="381.5" width="1" height="1"/><rect x="936.63" y="381.5" width="1" height="1"/><rect x="955.66" y="381.5" width="1" height="1"/><rect x="41.94" y="434.5" width="1" height="1"/><rect x="60.97" y="434.5" width="1" height="1"/><rect x="80.01" y="434.5" width="1" height="1"/><rect x="99.04" y="434.5" width="1" height="1"/><rect x="137.12" y="434.5" width="1" height="1"/><rect x="156.15" y="434.5" width="1" height="1"/><rect x="175.19" y="434.5" width="1" height="1"/><rect x="194.22" y="434.5" width="1" height="1"/><rect x="232.3" y="434.5" width="1" height="1"/><rect x="251.33" y="434.5" width="1" height="1"/><rect x="270.37" y="434.5" width="1" height="1"/><rect x="289.4" y="434.5" width="1" height="1"/><rect x="327.48" y="434.5" width="1" height="1"/><rect x="346.51" y="434.5" width="1" height="1"/><rect x="365.55" y="434.5" width="1" height="1"/><rect x="384.58" y="434.5" width="1" height="1"/><rect x="422.66" y="434.5" width="1" height="1"/><rect x="441.69" y="434.5" width="1" height="1"/><rect x="460.73" y="434.5" width="1" height="1"/><rect x="479.76" y="434.5" width="1" height="1"/><rect x="517.84" y="434.5" width="1" height="1"/><rect x="536.87" y="434.5" width="1" height="1"/><rect x="555.91" y="434.5" width="1" height="1"/><rect x="574.94" y="434.5" width="1" height="1"/><rect x="613.02" y="434.5" width="1" height="1"/><rect x="632.05" y="434.5" width="1" height="1"/><rect x="651.09" y="434.5" width="1" height="1"/><rect x="670.12" y="434.5" width="1" height="1"/><rect x="708.2" y="434.5" width="1" height="1"/><rect x="727.23" y="434.5" width="1" height="1"/><rect x="746.27" y="434.5" width="1" height="1"/><rect x="765.3" y="434.5" width="1" height="1"/><rect x="803.38" y="434.5" width="1" height="1"/><rect x="822.41" y="434.5" width="1" height="1"/><rect x="841.45" y="434.5" width="1" height="1"/><rect x="860.48" y="434.5" width="1" height="1"/><rect x="898.56" y="434.5" width="1" height="1"/><rect x="917.59" y="434.5" width="1" height="1"/><rect x="936.63" y="434.5" width="1" height="1"/><rect x="955.66" y="434.5" width="1" height="1"/></g>
<g fill="#b4b4b4" shape-rendering="auto"><rect x="41.94" y="64.7" width="1" height="2"/><rect x="41.94" y="484.7" width="1" height="2"/><rect x="60.97" y="64.7" width="1" height="2"/><rect x="60.97" y="484.7" width="1" height="2"/><rect x="80.01" y="64.7" width="1" height="2"/><rect x="80.01" y="484.7" width="1" height="2"/><rect x="99.04" y="64.7" width="1" height="2"/><rect x="99.04" y="484.7" width="1" height="2"/><rect x="118.08" y="64.7" width="1" height="3.6"/><rect x="118.08" y="483.1" width="1" height="3.6"/><rect x="137.12" y="64.7" width="1" height="2"/><rect x="137.12" y="484.7" width="1" height="2"/><rect x="156.15" y="64.7" width="1" height="2"/><rect x="156.15" y="484.7" width="1" height="2"/><rect x="175.19" y="64.7" width="1" height="2"/><rect x="175.19" y="484.7" width="1" height="2"/><rect x="194.22" y="64.7" width="1" height="2"/><rect x="194.22" y="484.7" width="1" height="2"/><rect x="213.26" y="64.7" width="1" height="3.6"/><rect x="213.26" y="483.1" width="1" height="3.6"/><rect x="232.3" y="64.7" width="1" height="2"/><rect x="232.3" y="484.7" width="1" height="2"/><rect x="251.33" y="64.7" width="1" height="2"/><rect x="251.33" y="484.7" width="1" height="2"/><rect x="270.37" y="64.7" width="1" height="2"/><rect x="270.37" y="484.7" width="1" height="2"/><rect x="289.4" y="64.7" width="1" height="2"/><rect x="289.4" y="484.7" width="1" height="2"/><rect x="308.44" y="64.7" width="1" height="3.6"/><rect x="308.44" y="483.1" width="1" height="3.6"/><rect x="327.48" y="64.7" width="1" height="2"/><rect x="327.48" y="484.7" width="1" height="2"/><rect x="346.51" y="64.7" width="1" height="2"/><rect x="346.51" y="484.7" width="1" height="2"/><rect x="365.55" y="64.7" width="1" height="2"/><rect x="365.55" y="484.7" width="1" height="2"/><rect x="384.58" y="64.7" width="1" height="2"/><rect x="384.58" y="484.7" width="1" height="2"/><rect x="403.62" y="64.7" width="1" height="3.6"/><rect x="403.62" y="483.1" width="1" height="3.6"/><rect x="422.66" y="64.7" width="1" height="2"/><rect x="422.66" y="484.7" width="1" height="2"/><rect x="441.69" y="64.7" width="1" height="2"/><rect x="441.69" y="484.7" width="1" height="2"/><rect x="460.73" y="64.7" width="1" height="2"/><rect x="460.73" y="484.7" width="1" height="2"/><rect x="479.76" y="64.7" width="1" height="2"/><rect x="479.76" y="484.7" width="1" height="2"/><rect x="498.8" y="64.7" width="1" height="3.6"/><rect x="498.8" y="483.1" width="1" height="3.6"/><rect x="517.84" y="64.7" width="1" height="2"/><rect x="517.84" y="484.7" width="1" height="2"/><rect x="536.87" y="64.7" width="1" height="2"/><rect x="536.87" y="484.7" width="1" height="2"/><rect x="555.91" y="64.7" width="1" height="2"/><rect x="555.91" y="484.7" width="1" height="2"/><rect x="574.94" y="64.7" width="1" height="2"/><rect x="574.94" y="484.7" width="1" height="2"/><rect x="593.98" y="64.7" width="1" height="3.6"/><rect x="593.98" y="483.1" width="1" height="3.6"/><rect x="613.02" y="64.7" width="1" height="2"/><rect x="613.02" y="484.7" width="1" height="2"/><rect x="632.05" y="64.7" width="1" height="2"/><rect x="632.05" y="484.7" width="1" height="2"/><rect x="651.09" y="64.7" width="1" height="2"/><rect x="651.09" y="484.7" width="1" height="2"/><rect x="670.12" y="64.7" width="1" height="2"/><rect x="670.12" y="484.7" width="1" height="2"/><rect x="689.16" y="64.7" width="1" height="3.6"/><rect x="689.16" y="483.1" width="1" height="3.6"/><rect x="708.2" y="64.7" width="1" height="2"/><rect x="708.2" y="484.7" width="1" height="2"/><rect x="727.23" y="64.7" width="1" height="2"/><rect x="727.23" y="484.7" width="1" height="2"/><rect x="746.27" y="64.7" width="1" height="2"/><rect x="746.27" y="484.7" width="1" height="2"/><rect x="765.3" y="64.7" width="1" height="2"/><rect x="765.3" y="484.7" width="1" height="2"/><rect x="784.34" y="64.7" width="1" height="3.6"/><rect x="784.34" y="483.1" width="1" height="3.6"/><rect x="803.38" y="64.7" width="1" height="2"/><rect x="803.38" y="484.7" width="1" height="2"/><rect x="822.41" y="64.7" width="1" height="2"/><rect x="822.41" y="484.7" width="1" height="2"/><rect x="841.45" y="64.7" width="1" height="2"/><rect x="841.45" y="484.7" width="1" height="2"/><rect x="860.48" y="64.7" width="1" height="2"/><rect x="860.48" y="484.7" width="1" height="2"/><rect x="879.52" y="64.7" width="1" height="3.6"/><rect x="879.52" y="483.1" width="1" height="3.6"/><rect x="898.56" y="64.7" width="1" height="2"/><rect x="898.56" y="484.7" width="1" height="2"/><rect x="917.59" y="64.7" width="1" height="2"/><rect x="917.59" y="484.7" width="1" height="2"/><rect x="936.63" y="64.7" width="1" height="2"/><rect x="936.63" y="484.7" width="1" height="2"/><rect x="955.66" y="64.7" width="1" height="2"/><rect x="955.66" y="484.7" width="1" height="2"/><rect x="24" y="74.1" width="2.5" height="1"/><rect x="971.9" y="74.1" width="2.5" height="1"/><rect x="24" y="84.7" width="2.5" height="1"/><rect x="971.9" y="84.7" width="2.5" height="1"/><rect x="24" y="95.3" width="2.5" height="1"/><rect x="971.9" y="95.3" width="2.5" height="1"/><rect x="24" y="105.9" width="2.5" height="1"/><rect x="971.9" y="105.9" width="2.5" height="1"/><rect x="24" y="116.5" width="4" height="1"/><rect x="970.4" y="116.5" width="4" height="1"/><rect x="24" y="127.1" width="2.5" height="1"/><rect x="971.9" y="127.1" width="2.5" height="1"/><rect x="24" y="137.7" width="2.5" height="1"/><rect x="971.9" y="137.7" width="2.5" height="1"/><rect x="24" y="148.3" width="2.5" height="1"/><rect x="971.9" y="148.3" width="2.5" height="1"/><rect x="24" y="158.9" width="2.5" height="1"/><rect x="971.9" y="158.9" width="2.5" height="1"/><rect x="24" y="169.5" width="4" height="1"/><rect x="970.4" y="169.5" width="4" height="1"/><rect x="24" y="180.1" width="2.5" height="1"/><rect x="971.9" y="180.1" width="2.5" height="1"/><rect x="24" y="190.7" width="2.5" height="1"/><rect x="971.9" y="190.7" width="2.5" height="1"/><rect x="24" y="201.3" width="2.5" height="1"/><rect x="971.9" y="201.3" width="2.5" height="1"/><rect x="24" y="211.9" width="2.5" height="1"/><rect x="971.9" y="211.9" width="2.5" height="1"/><rect x="24" y="222.5" width="4" height="1"/><rect x="970.4" y="222.5" width="4" height="1"/><rect x="24" y="233.1" width="2.5" height="1"/><rect x="971.9" y="233.1" width="2.5" height="1"/><rect x="24" y="243.7" width="2.5" height="1"/><rect x="971.9" y="243.7" width="2.5" height="1"/><rect x="24" y="254.3" width="2.5" height="1"/><rect x="971.9" y="254.3" width="2.5" height="1"/><rect x="24" y="264.9" width="2.5" height="1"/><rect x="971.9" y="264.9" width="2.5" height="1"/><rect x="24" y="275.5" width="4" height="1"/><rect x="970.4" y="275.5" width="4" height="1"/><rect x="24" y="286.1" width="2.5" height="1"/><rect x="971.9" y="286.1" width="2.5" height="1"/><rect x="24" y="296.7" width="2.5" height="1"/><rect x="971.9" y="296.7" width="2.5" height="1"/><rect x="24" y="307.3" width="2.5" height="1"/><rect x="971.9" y="307.3" width="2.5" height="1"/><rect x="24" y="317.9" width="2.5" height="1"/><rect x="971.9" y="317.9" width="2.5" height="1"/><rect x="24" y="328.5" width="4" height="1"/><rect x="970.4" y="328.5" width="4" height="1"/><rect x="24" y="339.1" width="2.5" height="1"/><rect x="971.9" y="339.1" width="2.5" height="1"/><rect x="24" y="349.7" width="2.5" height="1"/><rect x="971.9" y="349.7" width="2.5" height="1"/><rect x="24" y="360.3" width="2.5" height="1"/><rect x="971.9" y="360.3" width="2.5" height="1"/><rect x="24" y="370.9" width="2.5" height="1"/><rect x="971.9" y="370.9" width="2.5" height="1"/><rect x="24" y="381.5" width="4" height="1"/><rect x="970.4" y="381.5" width="4" height="1"/><rect x="24" y="392.1" width="2.5" height="1"/><rect x="971.9" y="392.1" width="2.5" height="1"/><rect x="24" y="402.7" width="2.5" height="1"/><rect x="971.9" y="402.7" width="2.5" height="1"/><rect x="24" y="413.3" width="2.5" height="1"/><rect x="971.9" y="413.3" width="2.5" height="1"/><rect x="24" y="423.9" width="2.5" height="1"/><rect x="971.9" y="423.9" width="2.5" height="1"/><rect x="24" y="434.5" width="4" height="1"/><rect x="970.4" y="434.5" width="4" height="1"/><rect x="24" y="445.1" width="2.5" height="1"/><rect x="971.9" y="445.1" width="2.5" height="1"/><rect x="24" y="455.7" width="2.5" height="1"/><rect x="971.9" y="455.7" width="2.5" height="1"/><rect x="24" y="466.3" width="2.5" height="1"/><rect x="971.9" y="466.3" width="2.5" height="1"/><rect x="24" y="476.9" width="2.5" height="1"/><rect x="971.9" y="476.9" width="2.5" height="1"/></g>
<g fill="#c4c4c4" shape-rendering="auto"><rect x="24" y="276" width="950.4" height="1"/><rect x="499" y="64.7" width="1" height="422"/><rect x="41.94" y="272.5" width="1" height="8"/><rect x="60.97" y="272.5" width="1" height="8"/><rect x="80.01" y="272.5" width="1" height="8"/><rect x="99.04" y="272.5" width="1" height="8"/><rect x="118.08" y="272.5" width="1" height="8"/><rect x="137.12" y="272.5" width="1" height="8"/><rect x="156.15" y="272.5" width="1" height="8"/><rect x="175.19" y="272.5" width="1" height="8"/><rect x="194.22" y="272.5" width="1" height="8"/><rect x="213.26" y="272.5" width="1" height="8"/><rect x="232.3" y="272.5" width="1" height="8"/><rect x="251.33" y="272.5" width="1" height="8"/><rect x="270.37" y="272.5" width="1" height="8"/><rect x="289.4" y="272.5" width="1" height="8"/><rect x="308.44" y="272.5" width="1" height="8"/><rect x="327.48" y="272.5" width="1" height="8"/><rect x="346.51" y="272.5" width="1" height="8"/><rect x="365.55" y="272.5" width="1" height="8"/><rect x="384.58" y="272.5" width="1" height="8"/><rect x="403.62" y="272.5" width="1" height="8"/><rect x="422.66" y="272.5" width="1" height="8"/><rect x="441.69" y="272.5" width="1" height="8"/><rect x="460.73" y="272.5" width="1" height="8"/><rect x="479.76" y="272.5" width="1" height="8"/><rect x="498.8" y="272.5" width="1" height="8"/><rect x="517.84" y="272.5" width="1" height="8"/><rect x="536.87" y="272.5" width="1" height="8"/><rect x="555.91" y="272.5" width="1" height="8"/><rect x="574.94" y="272.5" width="1" height="8"/><rect x="593.98" y="272.5" width="1" height="8"/><rect x="613.02" y="272.5" width="1" height="8"/><rect x="632.05" y="272.5" width="1" height="8"/><rect x="651.09" y="272.5" width="1" height="8"/><rect x="670.12" y="272.5" width="1" height="8"/><rect x="689.16" y="272.5" width="1" height="8"/><rect x="708.2" y="272.5" width="1" height="8"/><rect x="727.23" y="272.5" width="1" height="8"/><rect x="746.27" y="272.5" width="1" height="8"/><rect x="765.3" y="272.5" width="1" height="8"/><rect x="784.34" y="272.5" width="1" height="8"/><rect x="803.38" y="272.5" width="1" height="8"/><rect x="822.41" y="272.5" width="1" height="8"/><rect x="841.45" y="272.5" width="1" height="8"/><rect x="860.48" y="272.5" width="1" height="8"/><rect x="879.52" y="272.5" width="1" height="8"/><rect x="898.56" y="272.5" width="1" height="8"/><rect x="917.59" y="272.5" width="1" height="8"/><rect x="936.63" y="272.5" width="1" height="8"/><rect x="955.66" y="272.5" width="1" height="8"/><rect x="495.75" y="74.1" width="7.5" height="1"/><rect x="495.75" y="84.7" width="7.5" height="1"/><rect x="495.75" y="95.3" width="7.5" height="1"/><rect x="495.75" y="105.9" width="7.5" height="1"/><rect x="495.75" y="116.5" width="7.5" height="1"/><rect x="495.75" y="127.1" width="7.5" height="1"/><rect x="495.75" y="137.7" width="7.5" height="1"/><rect x="495.75" y="148.3" width="7.5" height="1"/><rect x="495.75" y="158.9" width="7.5" height="1"/><rect x="495.75" y="169.5" width="7.5" height="1"/><rect x="495.75" y="180.1" width="7.5" height="1"/><rect x="495.75" y="190.7" width="7.5" height="1"/><rect x="495.75" y="201.3" width="7.5" height="1"/><rect x="495.75" y="211.9" width="7.5" height="1"/><rect x="495.75" y="222.5" width="7.5" height="1"/><rect x="495.75" y="233.1" width="7.5" height="1"/><rect x="495.75" y="243.7" width="7.5" height="1"/><rect x="495.75" y="254.3" width="7.5" height="1"/><rect x="495.75" y="264.9" width="7.5" height="1"/><rect x="495.75" y="275.5" width="7.5" height="1"/><rect x="495.75" y="286.1" width="7.5" height="1"/><rect x="495.75" y="296.7" width="7.5" height="1"/><rect x="495.75" y="307.3" width="7.5" height="1"/><rect x="495.75" y="317.9" width="7.5" height="1"/><rect x="495.75" y="328.5" width="7.5" height="1"/><rect x="495.75" y="339.1" width="7.5" height="1"/><rect x="495.75" y="349.7" width="7.5" height="1"/><rect x="495.75" y="360.3" width="7.5" height="1"/><rect x="495.75" y="370.9" width="7.5" height="1"/><rect x="495.75" y="381.5" width="7.5" height="1"/><rect x="495.75" y="392.1" width="7.5" height="1"/><rect x="495.75" y="402.7" width="7.5" height="1"/><rect x="495.75" y="413.3" width="7.5" height="1"/><rect x="495.75" y="423.9" width="7.5" height="1"/><rect x="495.75" y="434.5" width="7.5" height="1"/><rect x="495.75" y="445.1" width="7.5" height="1"/><rect x="495.75" y="455.7" width="7.5" height="1"/><rect x="495.75" y="466.3" width="7.5" height="1"/><rect x="495.75" y="476.9" width="7.5" height="1"/></g>
<polyline points="24,304.9 25.5,303.4 27,304.9 27,304.9 28.3,302.4 29.6,304.9 29.6,304.9 30.9,302.8 32.2,304.9 32.2,304.9 34.2,303.4 36.2,304.9 36.2,304.9 37.5,303.4 38.8,304.9 38.8,304.9 40.1,302.8 41.4,304.9 41.4,304.9 42.7,303.4 44,304.9 44,304.9 45.5,302.4 47,304.9 47,304.9 48.5,303.1 50,304.9 50,304.9 51.3,303.1 52.6,304.9 52.6,304.9 54.1,302.4 55.6,304.9 55.6,304.9 57.1,303.1 58.6,304.9 58.6,304.9 59.9,302.4 61.2,304.9 61.2,304.9 63.2,303.4 65.2,304.9 65.2,304.9 67.7,304.9 67.7,304.9 69.7,303.1 71.7,304.9 71.7,304.9 73.2,302.8 74.7,304.9 74.7,304.9 76.4,303.4 78.1,304.9 78.1,304.9 82.1,304.9 82.1,304.9 83.4,302.4 84.7,304.9 84.7,304.9 86.2,303.1 87.7,304.9 87.7,304.9 89.7,303.4 91.7,304.9 91.7,304.9 93,303.1 94.3,304.9 94.3,304.9 96,303.4 97.7,304.9 97.7,304.9 99.7,302.4 101.7,304.9 101.7,304.9 104.2,304.9 104.2,304.9 105.5,302.4 106.8,304.9 106.8,304.9 109.3,304.9 109.3,304.9 111.3,303.1 113.3,304.9 113.3,304.9 115,302.4 116.7,304.9 116.7,304.9 119.2,304.9 119.2,304.9 120.5,303.4 121.8,304.9 121.8,304.9 123.5,302.8 125.2,304.9 125.2,304.9 127.7,304.9 127.7,304.9 129.7,302.4 131.7,304.9 131.7,304.9 133.7,303.1 135.7,304.9 135.7,304.9 138.2,304.9 138.2,304.9 140.7,304.9 140.7,304.9 142.4,303.4 144.1,304.9 144.1,304.9 145.6,304.9 145.6,304.9 147.1,302.8 148.6,304.9 148.6,304.9 149.9,303.4 151.2,304.9 151.2,304.9 152.7,304.9 152.7,304.9 154,302.8 155.3,304.9 155.3,304.9 157,303.1 158.7,304.9 158.7,304.9 162.7,304.9 162.7,304.9 166.7,304.9 166.7,304.9 168,303.4 169.3,304.9 169.3,304.9 173.3,304.9 173.3,304.9 175.8,304.9 175.8,304.9 177.8,302.4 179.8,304.9 179.8,304.9 181.8,302.4 183.8,304.9 183.8,304.9 185.3,303.4 186.8,304.9 186.8,304.9 188.5,302.4 190.2,304.9 190.2,304.9 191.7,302.4 193.2,304.9 193.2,304.9 197.2,304.9 197.2,304.9 198.7,303.4 200.2,304.9 200.2,304.9 201.9,303.1 203.6,304.9 203.6,304.9 205.6,302.4 207.6,304.9 207.6,304.9 209.6,303.4 211.6,304.9 211.6,304.9 213.3,302.4 215,304.9 215,304.9 216.7,303.1 218.4,304.9 218.4,304.9 219.9,302.4 221.4,304.9 221.4,304.9 223.1,302.8 224.8,304.9 224.8,304.9 226.1,303.1 227.4,304.9 227.4,304.9 228.9,304.9 228.9,304.9 230.6,303.1 232.3,304.9 232.3,304.9 234.8,304.9 234.8,304.9 238.8,304.9 238.8,304.9 240.5,302.8 242.2,304.9 242.2,304.9 243.7,302.8 245.2,304.9 245.2,304.9 249.2,304.9 249.2,304.9 250.7,304.9 250.7,304.9 252.4,302.4 254.1,304.9 254.1,304.9 256.6,304.9 256.6,304.9 258.1,303.1 259.6,304.9 259.6,304.9 261.3,303.1 263,304.9 263,304.9 264.3,302.8 265.6,304.9 265.6,304.9 267.3,302.8 269,304.9 269,304.9 270.3,303.4 271.6,304.9 271.6,304.9 274.1,304.9 274.1,304.9 275.6,304.9 275.6,304.9 277.1,304.9 277.1,304.9 281.1,304.9 281.1,304.9 283.6,304.9 283.6,304.9 286.1,304.9 286.1,304.9 288.6,304.9 288.6,304.9 290.6,303.4 292.6,304.9 292.6,304.9 293.9,302.8 295.2,304.9 295.2,304.9 296.7,302.4 298.2,304.9 298.2,304.9 300.2,302.8 302.2,304.9 302.2,304.9 304.2,303.1 306.2,304.9 306.2,304.9 307.7,302.4 309.2,304.9 309.2,304.9 310.5,302.8 311.8,304.9 311.8,304.9 313.3,302.8 314.8,304.9 314.8,304.9 316.3,303.1 317.8,304.9 317.8,304.9 319.5,303.1 321.2,304.9 321.2,304.9 322.7,302.4 324.2,304.9 324.2,304.9 326.7,304.9 326.7,304.9 330.7,304.9 330.7,304.9 332.7,302.8 334.7,304.9 334.7,304.9 336,303.4 337.3,304.9 337.3,304.9 341.3,304.9 341.3,304.9 342.8,302.8 344.3,304.9 344.3,304.9 345.6,302.4 346.9,304.9 346.9,304.9 348.9,302.4 350.9,304.9 350.9,304.9 352.4,304.9 352.4,304.9 354.1,302.4 355.8,304.9 355.8,304.9 359.8,304.9 359.8,304.9 361.1,302.4 362.4,304.9 362.4,304.9 363.9,303.1 365.4,304.9 365.4,304.9 367.4,302.8 369.4,304.9 369.4,304.9 371.1,302.8 372.8,304.9 372.8,304.9 374.3,304.9 374.3,304.9 376.3,303.4 378.3,304.9 378.3,304.9 379.8,303.4 381.3,304.9 381.3,304.9 383,302.4 384.7,304.9 384.7,304.9 386.2,304.9 386.2,304.9 390.2,304.9 390.2,304.9 391.7,303.1 393.2,304.9 393.2,304.9 395.7,304.9 395.7,304.9 397,303.4 398.3,304.9 398.3,304.9 399.8,304.9 399.8,304.9 401.3,304.9 401.3,304.9 403.3,303.4 405.3,304.9 405.3,304.9 406.8,303.1 408.3,304.9 408.3,304.9 410,302.4 411.7,304.9 411.7,304.9 413.7,303.4 415.7,304.9 415.7,304.9 417.7,303.1 419.7,304.9 419.7,304.9 421.4,302.4 423.1,304.9 423.1,304.9 424.6,302.4 426.1,304.9 426.1,304.9 427.8,302.4 429.5,304.9 429.5,304.9 431,304.9 431,304.9 432.5,303.4 434,304.9 434,304.9 438,304.9 438,304.9 440.5,304.9 440.5,304.9 442.5,303.1 444.5,304.9 444.5,304.9 445.8,302.8 447.1,304.9 447.1,304.9 448.4,303.1 449.7,304.9 449.7,304.9 453.7,304.9 453.7,304.9 455.4,302.4 457.1,304.9 457.1,304.9 458.6,302.4 460.1,304.9 460.1,304.9 461.4,303.4 462.7,304.9 462.7,304.9 464.7,303.1 466.7,304.9 466.7,304.9 468,302.8 469.3,304.9 469.3,304.9 470.8,304.9 470.8,304.9 472.3,302.8 473.8,304.9 473.8,304.9 477.8,304.9 477.8,304.9 479.3,303.1 480.8,304.9 480.8,304.9 482.3,303.1 483.8,304.9 483.8,304.9 485.1,303.1 486.4,304.9 486.4,304.9 487.7,302.8 489,304.9 489,304.9 490.5,303.4 492,304.9 492,304.9 494,303.4 496,304.9 496,304.9 498,303.1 500,304.9 500,304.9 501.5,303.1 503,304.9 503,304.9 504.5,303.4 506,304.9 506,304.9 507.5,304.9 507.5,304.9 509,304.9 509,304.9 510.7,303.4 512.4,304.9 512.4,304.9 513.7,303.4 515,304.9 515,304.9 519,304.9 519,304.9 523,304.9 523,304.9 524.7,302.4 526.4,304.9 526.4,304.9 527.9,303.1 529.4,304.9 529.4,304.9 531.1,303.1 532.8,304.9 532.8,304.9 536.8,304.9 536.8,304.9 538.1,303.1 539.4,304.9 539.4,304.9 540.9,302.4 542.4,304.9 542.4,304.9 543.7,303.4 545,304.9 545,304.9 546.5,302.8 548,304.9 548,304.9 549.3,302.4 550.6,304.9 550.6,304.9 551.9,302.8 553.2,304.9 553.2,304.9 554.5,303.4 555.8,304.9 555.8,304.9 557.5,302.8 559.2,304.9 559.2,304.9 560.7,303.4 562.2,304.9 562.2,304.9 566.2,304.9 566.2,304.9 567.7,304.9 567.7,304.9 569.2,302.4 570.7,304.9 570.7,304.9 574.7,304.9 574.7,304.9 578.7,304.9 578.7,304.9 580.2,302.4 581.7,304.9 581.7,304.9 585.7,304.9 585.7,304.9 589.7,304.9 589.7,304.9 591.2,302.4 592.7,304.9 592.7,304.9 594.2,303.1 595.7,304.9 595.7,304.9 598.2,304.9 598.2,304.9 602.2,304.9 602.2,304.9 603.5,302.8 604.8,304.9 604.8,304.9 606.1,303.4 607.4,304.9 607.4,304.9 611.4,304.9 611.4,304.9 615.4,304.9 615.4,304.9 616.7,303.4 618,304.9 618,304.9 619.3,303.1 620.6,304.9 620.6,304.9 622.1,302.8 623.6,304.9 623.6,304.9 626.1,304.9 626.1,304.9 628.1,302.4 630.1,304.9 630.1,304.9 631.8,302.4 633.5,304.9 633.5,304.9 635,302.4 636.5,304.9 636.5,304.9 638.2,303.1 639.9,304.9 639.9,304.9 641.6,302.8 643.3,304.9 643.3,304.9 644.6,303.4 645.9,304.9 645.9,304.9 647.2,302.8 648.5,304.9 648.5,304.9 650.2,303.1 651.9,304.9 651.9,304.9 653.9,302.4 655.9,304.9 655.9,304.9 659.9,304.9 659.9,304.9 661.2,303.4 662.5,304.9 662.5,304.9 664.5,302.4 666.5,304.9 666.5,304.9 669,304.9 669,304.9 671.5,304.9 671.5,304.9 673,302.4 674.5,304.9 674.5,304.9 676,303.1 677.5,304.9 677.5,304.9 679,304.9 679,304.9 680.7,302.4 682.4,304.9 682.4,304.9 683.9,303.4 685.4,304.9 685.4,304.9 687.9,304.9 687.9,304.9 689.4,302.4 690.9,304.9 690.9,304.9 694.9,304.9 694.9,304.9 696.6,302.8 698.3,304.9 698.3,304.9 700.3,303.1 702.3,304.9 702.3,304.9 704,302.4 705.7,304.9 705.7,304.9 707.4,303.4 709.1,304.9 709.1,304.9 710.6,302.4 712.1,304.9 712.1,304.9 714.6,304.9 714.6,304.9 715.9,303.4 717.2,304.9 717.2,304.9 718.5,303.1 719.8,304.9 719.8,304.9 722.3,304.9 722.3,304.9 724.8,304.9 724.8,304.9 726.5,302.8 728.2,304.9 728.2,304.9 729.9,303.4 731.6,304.9 731.6,304.9 733.1,303.1 734.6,304.9 734.6,304.9 737.1,304.9 737.1,304.9 741.1,304.9 741.1,304.9 742.6,302.4 744.1,304.9 744.1,304.9 746.1,303.4 748.1,304.9 748.1,304.9 749.6,303.1 751.1,304.9 751.1,304.9 752.6,302.8 754.1,304.9 754.1,304.9 755.8,303.1 757.5,304.9 757.5,304.9 759.2,303.4 760.9,304.9 760.9,304.9 762.6,303.4 764.3,304.9 764.3,304.9 766.3,302.4 768.3,304.9 768.3,304.9 769.8,302.4 771.3,304.9 771.3,304.9 773.3,302.8 775.3,304.9 775.3,304.9 777,303.4 778.7,304.9 778.7,304.9 780.2,302.8 781.7,304.9 781.7,304.9 783.4,302.4 785.1,304.9 785.1,304.9 786.8,303.1 788.5,304.9 788.5,304.9 790,304.9 790,304.9 794,304.9 794,304.9 796.5,304.9 796.5,304.9 798,303.4 799.5,304.9 799.5,304.9 800.8,303.4 802.1,304.9 802.1,304.9 803.8,302.8 805.5,304.9 805.5,304.9 807,302.4 808.5,304.9 808.5,304.9 810,303.4 811.5,304.9 811.5,304.9 813.5,303.4 815.5,304.9 815.5,304.9 817,304.9 817,304.9 819,303.4 821,304.9 821,304.9 823.5,304.9 823.5,304.9 825.5,303.4 827.5,304.9 827.5,304.9 829,304.9 829,304.9 830.5,304.9 830.5,304.9 831.8,303.4 833.1,304.9 833.1,304.9 834.4,302.4 835.7,304.9 835.7,304.9 837.2,304.9 837.2,304.9 838.5,303.1 839.8,304.9 839.8,304.9 843.8,304.9 843.8,304.9 845.8,302.4 847.8,304.9 847.8,304.9 849.5,302.8 851.2,304.9 851.2,304.9 852.7,302.4 854.2,304.9 854.2,304.9 855.9,303.4 857.6,304.9 857.6,304.9 859.3,302.8 861,304.9 861,304.9 862.5,302.8 864,304.9 864,304.9 866,303.1 868,304.9 868,304.9 869.5,303.4 871,304.9 871,304.9 875,304.9 875,304.9 876.7,302.8 878.4,304.9 878.4,304.9 880.1,302.8 881.8,304.9 881.8,304.9 883.5,303.4 885.2,304.9 885.2,304.9 887.2,302.8 889.2,304.9 889.2,304.9 890.9,302.4 892.6,304.9 892.6,304.9 894.1,303.1 895.6,304.9 895.6,304.9 897.1,304.9 897.1,304.9 898.6,303.1 900.1,304.9 900.1,304.9 902.6,304.9 902.6,304.9 904.6,302.8 906.6,304.9 906.6,304.9 909.1,304.9 909.1,304.9 910.4,302.8 911.7,304.9 911.7,304.9 913.2,304.9 913.2,304.9 914.7,303.4 916.2,304.9 916.2,304.9 917.5,302.8 918.8,304.9 918.8,304.9 920.5,302.4 922.2,304.9 922.2,304.9 923.7,304.9 923.7,304.9 925.2,303.4 926.7,304.9 926.7,304.9 928.7,303.1 930.7,304.9 930.7,304.9 933.2,304.9 933.2,304.9 934.5,302.4 935.8,304.9 935.8,304.9 937.5,303.4 939.2,304.9 939.2,304.9 940.7,304.9 940.7,304.9 942.2,303.4 943.7,304.9 943.7,304.9 945.4,303.4 947.1,304.9 947.1,304.9 949.1,302.8 951.1,304.9 951.1,304.9 953.1,302.8 955.1,304.9 955.1,304.9 957.1,302.4 959.1,304.9 959.1,304.9 960.6,303.4 962.1,304.9 962.1,304.9 963.4,303.4 964.7,304.9 964.7,304.9 966,303.1 967.3,304.9 967.3,304.9 968.6,303.1 969.9,304.9 969.9,304.9 971.6,302.4 973.3,304.9 973.3,304.9 975,303.1 976.7,304.9" fill="none" stroke="#ffff44" stroke-width="1.1" stroke-linejoin="round" shape-rendering="auto"/>
<g fill="#10105c" shape-rendering="auto"><rect x="330" y="306.5" width="1" height="1"/><rect x="764" y="306.5" width="1" height="1"/><rect x="50" y="307" width="1" height="1"/><rect x="135" y="309" width="1" height="1"/><rect x="758" y="309" width="1" height="1"/><rect x="820" y="309" width="1" height="1"/><rect x="834" y="308" width="1" height="1"/><rect x="961" y="309" width="1" height="1"/><rect x="860" y="309" width="1" height="1"/><rect x="161" y="309" width="1" height="1"/><rect x="213" y="306.5" width="1" height="1"/><rect x="847" y="308" width="1" height="1"/><rect x="868" y="307" width="1" height="1"/><rect x="647" y="307" width="1" height="1"/><rect x="361" y="308" width="1" height="1"/><rect x="497" y="308" width="1" height="1"/><rect x="828" y="306.5" width="1" height="1"/><rect x="550" y="307" width="1" height="1"/><rect x="427" y="307" width="1" height="1"/><rect x="279" y="309" width="1" height="1"/><rect x="92" y="306.5" width="1" height="1"/><rect x="519" y="308" width="1" height="1"/><rect x="190" y="309" width="1" height="1"/><rect x="930" y="306.5" width="1" height="1"/><rect x="99" y="308" width="1" height="1"/><rect x="665" y="306.5" width="1" height="1"/><rect x="239" y="306.5" width="1" height="1"/><rect x="457" y="309" width="1" height="1"/><rect x="752" y="309" width="1" height="1"/><rect x="203" y="307" width="1" height="1"/><rect x="162" y="309" width="1" height="1"/><rect x="497" y="307" width="1" height="1"/><rect x="791" y="306.5" width="1" height="1"/><rect x="824" y="308" width="1" height="1"/><rect x="326" y="308" width="1" height="1"/><rect x="606" y="308" width="1" height="1"/><rect x="407" y="308" width="1" height="1"/><rect x="781" y="308" width="1" height="1"/><rect x="229" y="309" width="1" height="1"/><rect x="279" y="307" width="1" height="1"/><rect x="277" y="307" width="1" height="1"/><rect x="183" y="308" width="1" height="1"/><rect x="931" y="307" width="1" height="1"/><rect x="360" y="306.5" width="1" height="1"/><rect x="431" y="308" width="1" height="1"/><rect x="277" y="307" width="1" height="1"/><rect x="691" y="306.5" width="1" height="1"/><rect x="695" y="309" width="1" height="1"/><rect x="63" y="306.5" width="1" height="1"/><rect x="30" y="309" width="1" height="1"/><rect x="930" y="307" width="1" height="1"/><rect x="886" y="309" width="1" height="1"/><rect x="962" y="308" width="1" height="1"/><rect x="67" y="308" width="1" height="1"/><rect x="264" y="306.5" width="1" height="1"/><rect x="77" y="307" width="1" height="1"/><rect x="640" y="307" width="1" height="1"/><rect x="102" y="308" width="1" height="1"/><rect x="550" y="307" width="1" height="1"/><rect x="485" y="308" width="1" height="1"/><rect x="819" y="306.5" width="1" height="1"/><rect x="134" y="308" width="1" height="1"/><rect x="248" y="306.5" width="1" height="1"/><rect x="403" y="308" width="1" height="1"/><rect x="170" y="306.5" width="1" height="1"/><rect x="234" y="308" width="1" height="1"/><rect x="65" y="307" width="1" height="1"/><rect x="860" y="306.5" width="1" height="1"/><rect x="864" y="308" width="1" height="1"/><rect x="444" y="308" width="1" height="1"/><rect x="215" y="308" width="1" height="1"/><rect x="105" y="307" width="1" height="1"/><rect x="58" y="309" width="1" height="1"/><rect x="587" y="309" width="1" height="1"/><rect x="90" y="309" width="1" height="1"/><rect x="129" y="309" width="1" height="1"/><rect x="705" y="307" width="1" height="1"/><rect x="680" y="306.5" width="1" height="1"/><rect x="694" y="307" width="1" height="1"/><rect x="433" y="308" width="1" height="1"/><rect x="445" y="308" width="1" height="1"/><rect x="709" y="308" width="1" height="1"/><rect x="453" y="306.5" width="1" height="1"/><rect x="345" y="308" width="1" height="1"/><rect x="450" y="309" width="1" height="1"/><rect x="44" y="308" width="1" height="1"/><rect x="685" y="307" width="1" height="1"/><rect x="426" y="309" width="1" height="1"/><rect x="234" y="306.5" width="1" height="1"/><rect x="470" y="307" width="1" height="1"/><rect x="459" y="306.5" width="1" height="1"/><rect x="866" y="306.5" width="1" height="1"/><rect x="441" y="308" width="1" height="1"/><rect x="497" y="307" width="1" height="1"/><rect x="159" y="306.5" width="1" height="1"/><rect x="78" y="307" width="1" height="1"/><rect x="682" y="309" width="1" height="1"/><rect x="117" y="308" width="1" height="1"/><rect x="780" y="307" width="1" height="1"/><rect x="175" y="308" width="1" height="1"/><rect x="316" y="307" width="1" height="1"/><rect x="559" y="307" width="1" height="1"/><rect x="94" y="306.5" width="1" height="1"/><rect x="418" y="309" width="1" height="1"/><rect x="797" y="307" width="1" height="1"/><rect x="334" y="307" width="1" height="1"/><rect x="883" y="306.5" width="1" height="1"/><rect x="960" y="309" width="1" height="1"/><rect x="348" y="306.5" width="1" height="1"/><rect x="648" y="309" width="1" height="1"/></g>
<g shape-rendering="auto" font-family="Liberation Sans, sans-serif">
<polygon points="10,426.8 17.3,426.8 21.5,431 17.3,435.3 10,435.3" fill="#ffff00"/>
<text x="13.4" y="434.4" font-size="8.4" textLength="4.2" lengthAdjust="spacingAndGlyphs" fill="#222" font-weight="bold" stroke="#222" stroke-width="0.15">1</text>
<polygon points="989,267.5 981,267.5 977,271.4 981,275.4 989,275.4" fill="#ffff00"/>
<text x="982.2" y="274.4" font-size="7.6" textLength="4.4" lengthAdjust="spacingAndGlyphs" fill="#3a3a10" font-weight="bold" stroke="#3a3a10" stroke-width="0.15">T</text>
<rect x="10.8" y="33.5" width="34.4" height="14.3" fill="#000"/>
<text x="16.5" y="44.5" font-size="9.8" textLength="22.6" lengthAdjust="spacingAndGlyphs" fill="#22cc22" stroke="#22cc22" stroke-width="0.4">AUTO</text>
<rect x="915.3" y="33" width="73.5" height="15.8" fill="#000"/>
<path d="M918.2 46.3 L922.3 46.3 L922.3 36.6 Q922.3 35 924 35 L925 35" fill="none" stroke="#f4f43c" stroke-width="1.1"/>
<path d="M919.2 42.7 L922.2 38.9 L925.2 42.7 Z" fill="#f4f43c"/>
<rect x="928.7" y="35.7" width="19" height="10.3" fill="#ffff14"/>
<text x="930" y="44.3" font-size="9.8" textLength="16.8" lengthAdjust="spacingAndGlyphs" fill="#3a2a10" stroke="#3a2a10" stroke-width="0.4">CH1</text>
<text x="955.6" y="44.3" font-size="9.8" textLength="21.2" lengthAdjust="spacingAndGlyphs" fill="#dcdc34" stroke="#dcdc34" stroke-width="0.4">1.51V</text>
<rect x="23" y="491" width="64" height="13.2" fill="#000"/>
<text x="24.7" y="500.7" font-size="9.8" textLength="17" lengthAdjust="spacingAndGlyphs" fill="#e2e238" stroke="#e2e238" stroke-width="0.4">CH1</text>
<path d="M44 496.5 h1.6 m1.3 0 h1.6 m1.3 0 h1.5" stroke="#d4d436" stroke-width="0.9" fill="none"/>
<path d="M44 499.3 h7.3" stroke="#d4d436" stroke-width="1" fill="none"/>
<text x="58" y="500.7" font-size="9.8" textLength="27.7" lengthAdjust="spacingAndGlyphs" fill="#e2e238" stroke="#e2e238" stroke-width="0.4">500mV</text>
<rect x="829" y="491" width="145.8" height="13.2" fill="#000"/>
<text x="831" y="500.7" font-size="9.8" textLength="54" lengthAdjust="spacingAndGlyphs" fill="#ec8626" stroke="#ec8626" stroke-width="0.4">Time: 200.0us</text>
<text x="898" y="500.7" font-size="9.8" textLength="75.6" lengthAdjust="spacingAndGlyphs" fill="#ec8626" stroke="#ec8626" stroke-width="0.4">Sample Rate: 1MHz</text>
</g>
</svg>

  <!-- control panel -->
  <div id="cpdiv" class="abs"></div>
  <div id="cphead" class="abs"></div>
  <div id="cpcombo" class="abs"></div>
  <div id="cpgrad" class="abs"></div>
  <div id="cpbody" class="abs"></div>
  <div id="bottom" class="abs"></div>
  <div id="bottomR" class="abs"></div>

  <svg class="scope" width="1200" height="515" viewBox="0 0 1200 515" font-family="Liberation Sans, sans-serif">
<text x="999.3" y="21.5" font-size="12.2" textLength="60.8" lengthAdjust="spacingAndGlyphs" fill="#1c2738" stroke="#1c2738" stroke-width="0.15">Control Panel</text>
<rect x="997" y="27.5" width="201.6" height="18.8" fill="#e2e2e2" stroke="#b6b6b6" stroke-width="1"/>
<text x="999.3" y="41.6" font-size="12.2" textLength="28.5" lengthAdjust="spacingAndGlyphs" fill="#141414" stroke="#141414" stroke-width="0.15">Scope</text>
<path d="M1189.4 35.4 l3.3 3.4 l3.3 -3.4" fill="none" stroke="#444" stroke-width="1.1"/>
<path d="M1177.6 14.2 h3.9 M1178 14 v4.4 M1181.2 14 v4.4 M1180.4 14 v4.4 M1176.2 18.5 h6.5 M1179.3 18.5 v2.4" stroke="#161616" stroke-width="1" fill="none"/>
<path d="M1189.4 14 l6.2 6.2 M1195.6 14 l-6.2 6.2" stroke="#161616" stroke-width="1.6" fill="none"/>
<rect x="1000.4" y="73.5" width="164.2" height="93.8" fill="none" stroke="#dedede" stroke-width="1"/><rect x="1060.4" y="71.5" width="45.4" height="4" fill="#f0f0f0"/><text x="1062.9" y="77.1" font-size="10" textLength="40.4" lengthAdjust="spacingAndGlyphs" fill="#151515" stroke="#151515" stroke-width="0.15">Horizontal</text>
<text x="1009.2" y="92" font-size="10" textLength="36.6" lengthAdjust="spacingAndGlyphs" fill="#111" stroke="#111" stroke-width="0.15">Time/DIV</text>
<rect x="1008.2" y="98.9" width="58.9" height="15.3" fill="#e1e1e1" stroke="#b0b0b0" stroke-width="1"/><text x="1010.6" y="110.1" font-size="10" textLength="31.8" lengthAdjust="spacingAndGlyphs" fill="#000" stroke="#000" stroke-width="0.15">200.0us</text><path d="M1056.9 105.3 l3.5 3.5 l3.5 -3.5" fill="none" stroke="#3c3c3c" stroke-width="1.2"/>
<text x="1009.1" y="132.6" font-size="10" textLength="28.1" lengthAdjust="spacingAndGlyphs" fill="#111" stroke="#111" stroke-width="0.15">Format</text>
<rect x="1008.2" y="140.8" width="58.9" height="15.3" fill="#e1e1e1" stroke="#b0b0b0" stroke-width="1"/><text x="1010.6" y="152" font-size="10" textLength="13.4" lengthAdjust="spacingAndGlyphs" fill="#000" stroke="#000" stroke-width="0.15">Y-T</text><path d="M1056.9 147.2 l3.5 3.5 l3.5 -3.5" fill="none" stroke="#3c3c3c" stroke-width="1.2"/>
<g><ellipse cx="1112.9" cy="119.7" rx="26.3" ry="24.5" fill="#d2d2d2" stroke="#707070" stroke-width="1.05"/><path d="M1091.1 141.9 L1097.3 136.1 M1134.3 141.9 L1128.9 136.3" stroke="#111" stroke-width="1.1" fill="none"/><ellipse cx="1112.9" cy="119.9" rx="23.9" ry="22.3" fill="#b4b4b4" stroke="#666666" stroke-width="0.9"/><path d="M1096.7 133.92 A21.8 20.5 0 0 1 1128.31 105.7" fill="none" stroke="#d9d9dc" stroke-width="2.9"/><path d="M1126.91 104.5 A21.8 20.5 0 0 1 1129.6 107.02" fill="none" stroke="#e8e8e8" stroke-width="2.6"/><path d="M1109.7 95.5 h6" stroke="#9a9a9a" stroke-width="1.5"/><ellipse cx="1113.05" cy="120.8" rx="19.5" ry="18.6" fill="#0000cc" stroke="#00005a" stroke-width="1"/><path d="M1114.5 117.7 L1119.7 106.3" stroke="#f6f6f6" stroke-width="1.2" stroke-linecap="round"/></g>
<rect x="1000.4" y="182.2" width="164.2" height="226.2" fill="none" stroke="#dedede" stroke-width="1"/><rect x="1065.9" y="180.2" width="34.6" height="4" fill="#f0f0f0"/><text x="1068.4" y="185.8" font-size="10" textLength="29.6" lengthAdjust="spacingAndGlyphs" fill="#151515" stroke="#151515" stroke-width="0.15">Vertical</text>
<rect x="1008" y="195.9" width="10.4" height="10.4" fill="#fff" stroke="#3a3a3a" stroke-width="1"/><path d="M1009.9 201.2 l2.4 2.5 l4.6 -5.2" fill="none" stroke="#222" stroke-width="1.1"/>
<text x="1021" y="204.5" font-size="10" textLength="17" lengthAdjust="spacingAndGlyphs" fill="#111" stroke="#111" stroke-width="0.15">CH1</text>
<rect x="1008.2" y="213.7" width="58.9" height="15.3" fill="#e1e1e1" stroke="#b0b0b0" stroke-width="1"/><text x="1010.6" y="224.9" font-size="10" textLength="27.9" lengthAdjust="spacingAndGlyphs" fill="#000" stroke="#000" stroke-width="0.15">500mV</text><path d="M1056.9 220.1 l3.5 3.5 l3.5 -3.5" fill="none" stroke="#3c3c3c" stroke-width="1.2"/>
<rect x="1008.2" y="241.7" width="58.9" height="15.3" fill="#cccccc" stroke="#c4c4c4" stroke-width="1"/><text x="1010.6" y="252.9" font-size="10" textLength="12.2" lengthAdjust="spacingAndGlyphs" fill="#8a8a8a" stroke="#8a8a8a" stroke-width="0.15">DC</text><path d="M1056.9 248.1 l3.5 3.5 l3.5 -3.5" fill="none" stroke="#b8b8b8" stroke-width="1.2"/>
<rect x="1008.2" y="269.7" width="58.9" height="15.3" fill="#e1e1e1" stroke="#b0b0b0" stroke-width="1"/><text x="1010.6" y="280.9" font-size="10" textLength="9.3" lengthAdjust="spacingAndGlyphs" fill="#000" stroke="#000" stroke-width="0.15">x1</text><path d="M1056.9 276.1 l3.5 3.5 l3.5 -3.5" fill="none" stroke="#3c3c3c" stroke-width="1.2"/>
<g><ellipse cx="1112.9" cy="227.7" rx="26.3" ry="24.5" fill="#d2d2d2" stroke="#707070" stroke-width="1.05"/><path d="M1091.1 249.9 L1097.3 244.1 M1134.3 249.9 L1128.9 244.3" stroke="#111" stroke-width="1.1" fill="none"/><ellipse cx="1112.9" cy="227.9" rx="23.9" ry="22.3" fill="#b4b4b4" stroke="#666666" stroke-width="0.9"/><path d="M1096.7 241.92 A21.8 20.5 0 0 1 1113.66 207.71" fill="none" stroke="#d2d2e0" stroke-width="2.9"/><path d="M1126.91 212.5 A21.8 20.5 0 0 1 1129.6 215.02" fill="none" stroke="#e8e8e8" stroke-width="2.6"/><path d="M1109.7 203.5 h6" stroke="#9a9a9a" stroke-width="1.5"/><ellipse cx="1113.05" cy="228.8" rx="19.5" ry="18.6" fill="#ffff00" stroke="#5a5a28" stroke-width="1"/><path d="M1111.9 223 L1109.8 213.1" stroke="#f4f4b0" stroke-width="1.2" stroke-linecap="round"/></g>
<rect x="1098.3" y="274.1" width="10.4" height="10.4" fill="#fff" stroke="#3a3a3a" stroke-width="1"/>
<text x="1111.6" y="282.9" font-size="10" textLength="20.4" lengthAdjust="spacingAndGlyphs" fill="#111" stroke="#111" stroke-width="0.15">Invert</text>
<rect x="1008" y="307.9" width="10.4" height="10.4" fill="#fff" stroke="#3a3a3a" stroke-width="1"/>
<text x="1021" y="316.5" font-size="10" textLength="17" lengthAdjust="spacingAndGlyphs" fill="#111" stroke="#111" stroke-width="0.15">CH2</text>
<rect x="1008.2" y="325.7" width="58.9" height="15.3" fill="#cccccc" stroke="#c4c4c4" stroke-width="1"/><text x="1010.6" y="336.9" font-size="10" textLength="25" lengthAdjust="spacingAndGlyphs" fill="#8a8a8a" stroke="#8a8a8a" stroke-width="0.15">1.00V</text><path d="M1056.9 332.1 l3.5 3.5 l3.5 -3.5" fill="none" stroke="#b8b8b8" stroke-width="1.2"/>
<rect x="1008.2" y="353.7" width="58.9" height="15.3" fill="#cccccc" stroke="#c4c4c4" stroke-width="1"/><text x="1010.6" y="364.9" font-size="10" textLength="12.2" lengthAdjust="spacingAndGlyphs" fill="#8a8a8a" stroke="#8a8a8a" stroke-width="0.15">DC</text><path d="M1056.9 360.1 l3.5 3.5 l3.5 -3.5" fill="none" stroke="#b8b8b8" stroke-width="1.2"/>
<rect x="1008.2" y="381.7" width="58.9" height="15.3" fill="#cccccc" stroke="#c4c4c4" stroke-width="1"/><text x="1010.6" y="392.9" font-size="10" textLength="9.3" lengthAdjust="spacingAndGlyphs" fill="#8a8a8a" stroke="#8a8a8a" stroke-width="0.15">x1</text><path d="M1056.9 388.1 l3.5 3.5 l3.5 -3.5" fill="none" stroke="#b8b8b8" stroke-width="1.2"/>
<g><ellipse cx="1112.9" cy="340.6" rx="26.3" ry="24.5" fill="#d2d2d2" stroke="#707070" stroke-width="1.05"/><path d="M1091.1 362.8 L1097.3 357 M1134.3 362.8 L1128.9 357.2" stroke="#111" stroke-width="1.1" fill="none"/><ellipse cx="1112.9" cy="340.8" rx="23.9" ry="22.3" fill="#b4b4b4" stroke="#666666" stroke-width="0.9"/><path d="M1096.7 354.82 A21.8 20.5 0 0 1 1128.31 326.6" fill="none" stroke="#d9d9dc" stroke-width="2.9"/><path d="M1126.91 325.4 A21.8 20.5 0 0 1 1129.6 327.92" fill="none" stroke="#e8e8e8" stroke-width="2.6"/><path d="M1109.7 316.4 h6" stroke="#9a9a9a" stroke-width="1.5"/><ellipse cx="1113.05" cy="341.7" rx="19.5" ry="18.6" fill="#9c9c9c" stroke="#3c3c3c" stroke-width="1"/><path d="M1109.6 338.8 L1099.3 332.1" stroke="#f6f6d0" stroke-width="1.2" stroke-linecap="round"/></g>
<rect x="1098.3" y="386.1" width="10.4" height="10.4" fill="#fff" stroke="#c0c0c0" stroke-width="1"/>
<text x="1111.6" y="394.9" font-size="10" textLength="20.4" lengthAdjust="spacingAndGlyphs" fill="#8c8c8c" stroke="#8c8c8c" stroke-width="0.15">Invert</text>
<rect x="1000.4" y="424.3" width="164.2" height="105.7" fill="none" stroke="#dedede" stroke-width="1"/><rect x="1066.8" y="422.3" width="32.3" height="4" fill="#f0f0f0"/><text x="1069.3" y="427.9" font-size="10" textLength="27.3" lengthAdjust="spacingAndGlyphs" fill="#151515" stroke="#151515" stroke-width="0.15">Trigger</text>
<text x="1011.2" y="454" font-size="10" textLength="52" lengthAdjust="spacingAndGlyphs" fill="#111" stroke="#111" stroke-width="0.15">Trigger Mode</text>
<rect x="1089.9" y="443" width="59.4" height="15.3" fill="#e1e1e1" stroke="#b0b0b0" stroke-width="1"/><text x="1092.3" y="454.2" font-size="10" textLength="20.7" lengthAdjust="spacingAndGlyphs" fill="#000" stroke="#000" stroke-width="0.15">Edge</text><path d="M1138.6 449.4 l3.5 3.5 l3.5 -3.5" fill="none" stroke="#3c3c3c" stroke-width="1.2"/>
<text x="1011.2" y="481.9" font-size="10" textLength="57.5" lengthAdjust="spacingAndGlyphs" fill="#111" stroke="#111" stroke-width="0.15">Trigger Sweep</text>
<rect x="1089.9" y="470.9" width="59.4" height="15.3" fill="#e1e1e1" stroke="#b0b0b0" stroke-width="1"/><text x="1092.3" y="482.1" font-size="10" textLength="24.2" lengthAdjust="spacingAndGlyphs" fill="#000" stroke="#000" stroke-width="0.15">AUTO</text><path d="M1138.6 477.3 l3.5 3.5 l3.5 -3.5" fill="none" stroke="#3c3c3c" stroke-width="1.2"/>
<text x="1011.2" y="509.7" font-size="10" textLength="58.3" lengthAdjust="spacingAndGlyphs" fill="#111" stroke="#111" stroke-width="0.15">Trigger Source</text>
<rect x="1089.9" y="498.7" width="59.4" height="15.3" fill="#e1e1e1" stroke="#b0b0b0" stroke-width="1"/><text x="1092.3" y="509.9" font-size="10" textLength="17.7" lengthAdjust="spacingAndGlyphs" fill="#000" stroke="#000" stroke-width="0.15">CH1</text><path d="M1138.6 505.1 l3.5 3.5 l3.5 -3.5" fill="none" stroke="#3c3c3c" stroke-width="1.2"/>
<rect x="1185.5" y="63" width="14.5" height="448" fill="#f0f0f0"/>
<rect x="1186.4" y="78.8" width="12.6" height="290.4" fill="#cdcdcd"/>
<rect x="1184.8" y="63" width="1" height="448" fill="#f8f8f8"/>
<path d="M1189.2 73 l3.4 -3.5 l3.4 3.5" fill="none" stroke="#262626" stroke-width="1.5"/>
<path d="M1189.2 500.8 l3.4 3.5 l3.4 -3.5" fill="none" stroke="#262626" stroke-width="1.5"/>
</svg>
  <div class="abs" style="left:993px;top:510.4px;width:207px;height:4.6px;background:linear-gradient(#f6f8fc 0,#eef2f8 28%,#cdd5e3 55%,#c2cadb)"></div>
</div>
</body>
</html>
